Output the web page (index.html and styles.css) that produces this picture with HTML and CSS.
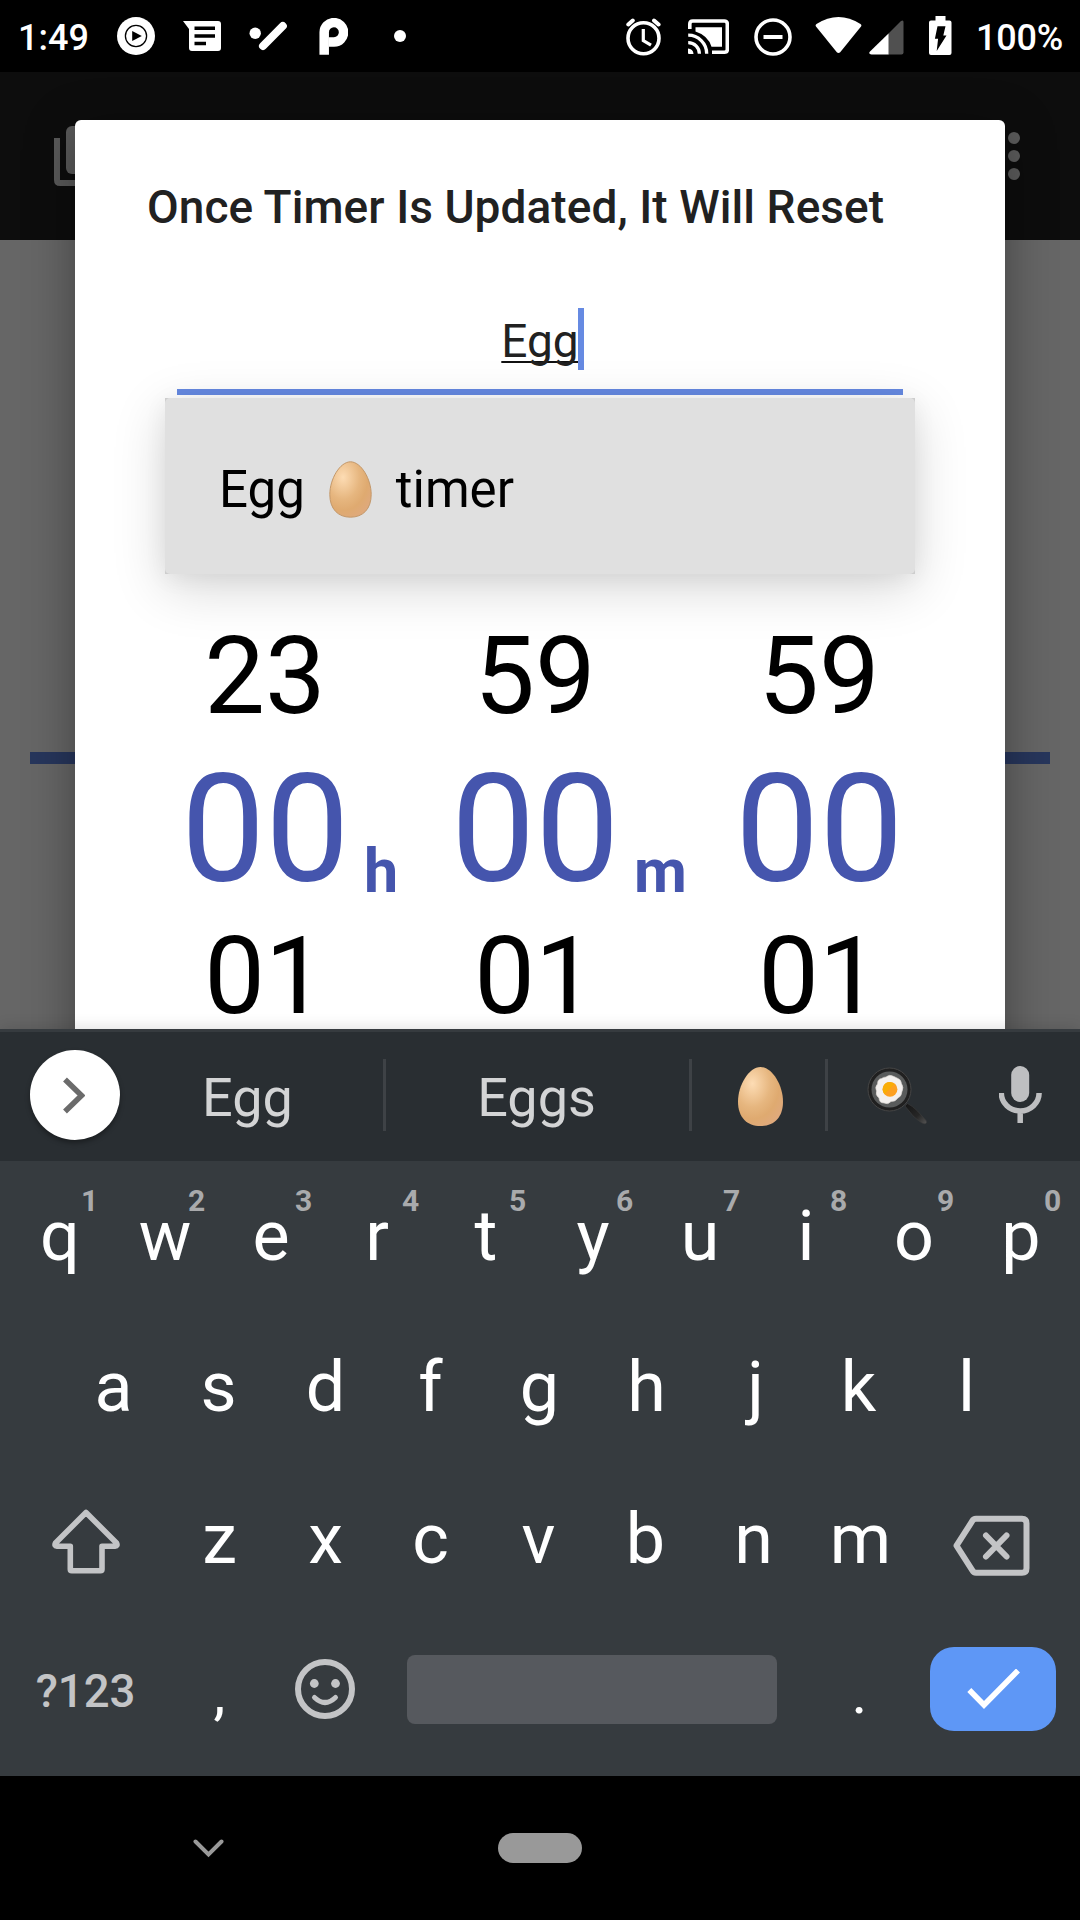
FILE: index.html
```html
<!DOCTYPE html>
<html lang="en">
<head>
<meta charset="utf-8">
<title>Timer</title>
<link rel="stylesheet" href="styles.css">
</head>
<body>
<div class="screen">
  <header class="status">
    <span class="clock">1:49</span>
    <svg class="ic-play" width="38" height="38" viewBox="117 17 38 38"><circle cx="136" cy="36" r="19" fill="#fff"/><circle cx="136" cy="36" r="10.6" fill="none" stroke="#000" stroke-width="1.3"/><path d="M132.2 31v10l9.6-5z" fill="#000"/></svg>
    <svg class="ic-message" width="38" height="30" viewBox="183 21 38 30"><path fill="#fff" d="M183 21h35q3 0 3 3v24q0 3-3 3h-26q-3 0-3-3V29z"/><path fill="none" stroke="#000" stroke-width="3.6" d="M194.500 28.300h20.500M194.500 36h20.500M194.500 43.500h11.500"/></svg>
    <svg class="ic-slash" width="38" height="30" viewBox="249 22 38 30"><circle cx="255.200" cy="34.200" r="5.700" fill="#fff"/><path d="M263 47l19.800-20" stroke="#fff" stroke-width="8" stroke-linecap="round"/></svg>
    <svg class="ic-p" width="29" height="37" viewBox="319 18 29 37"><path fill="none" stroke="#fff" stroke-width="9.500" d="M324.200 54.800V32.500A9.700 9.700 0 1 1 334 42h-5"/></svg>
    <svg class="ic-dot" width="12" height="12" viewBox="0 0 12 12"><circle cx="6" cy="6" r="6" fill="#fff"/></svg>
    <svg class="ic-alarm" width="36" height="38" viewBox="626 18 36 38"><g fill="none" stroke="#fff"><circle cx="643.500" cy="38.300" r="15.500" stroke-width="3.600"/><path stroke-width="3.200" d="M643.300 29v11.500l7.700 4.600"/><path stroke-width="4" stroke-linecap="round" d="M628.300 24.500l4.500-4M654 20.500l4.600 4"/></g></svg>
    <svg class="ic-cast" width="41" height="36" viewBox="688 19 41 36"><g fill="none" stroke="#fff"><path stroke-width="3.600" d="M689.800 29V24q0-3 3-3h31.500q3 0 3 3v25.500q0 2.700-3 2.700H712"/><path stroke-width="3.300" d="M688.200 35.200a18.500 18.500 0 0 1 18.500 18.500M688.200 42.600a11.200 11.200 0 0 1 11.200 11.200"/></g><path fill="#fff" d="M688 48.500a5.500 5.500 0 0 1 5.500 5.500H689q-1 0-1-1zM695.500 27.300H722v19.400h-10.500Q708 35.500 695.500 31.500z"/></svg>
    <svg class="ic-dnd" width="38" height="38" viewBox="754.500 17.500 38 38"><circle cx="773.500" cy="36.500" r="17" fill="none" stroke="#fff" stroke-width="3.600"/><path d="M764 36.500h19" stroke="#fff" stroke-width="4"/></svg>
    <svg class="ic-wifi" width="47" height="37" viewBox="815 17 47 37"><path fill="#fff" d="M816 26.500q-1-1.500.5-2.500 22-14 44 0 1.500 1 .5 2.500l-20.800 25.700q-1.700 1.600-3.400 0z"/></svg>
    <svg class="ic-signal" width="35" height="35" viewBox="869.500 19.500 35 35"><path fill="#505050" d="M888.500 33.500l13-13q2.500-1.500 2.500 1v30.500q0 2-2 2h-13.500z"/><path fill="#fff" d="M889 33v21h-17q-3.500-.5-1.500-3z"/></svg>
    <svg class="ic-battery" width="23" height="39" viewBox="929 16 23 39"><path fill="#fff" d="M935.500 16h10v4.500h4q2 0 2 2V53q0 2-2 2h-18.500q-2 0-2-2V22.500q0-2 2-2h4.500z"/><path fill="#000" d="M937.500 26.300h8l-2.200 9.200h3.200l-9.800 15.500 1.400-12.300h-3.200z"/></svg>
    <span class="percent">100%</span>
  </header>

  <main class="app">
    <div class="toolbar">
      <svg width="66" height="60" viewBox="54 126 66 60" fill="#5a5a5a"><path d="M54 138h6v42h42v6H60q-6 0-6-6z"/><rect x="66" y="126" width="48" height="48" rx="6"/></svg>
      <svg width="12" height="48" viewBox="0 0 12 48" fill="#5c5c5c"><circle cx="6" cy="6" r="6"/><circle cx="6" cy="24" r="6"/><circle cx="6" cy="42" r="6"/></svg>
    </div>
    <div class="rule"></div>

    <section class="dialog">
      <h1 class="title">Once Timer Is Updated, It Will Reset</h1>
      <div class="field">
        <span class="value">Egg<i class="caret"></i></span>
        <div class="dropdown">
          <span>Egg</span>
          <svg class="egg" width="43" height="57" viewBox="0 0 43 57"><defs><radialGradient id="shell" cx=".32" cy=".28" r=".8"><stop offset="0" stop-color="#fddcb4"/><stop offset=".5" stop-color="#e6b67f"/><stop offset=".75" stop-color="#dfaa70"/><stop offset="1" stop-color="#dfa97c"/></radialGradient></defs><path fill="url(#shell)" stroke="#c3986a" stroke-width="1" d="M21.500.8C32 .8 42.200 18 42.200 33.500 42.200 48 34 56.200 21.500 56.200S.8 48 .8 33.500C.8 18 11 .8 21.500.8z"/></svg>
          <span>timer</span>
        </div>
      </div>
      <div class="picker">
        <span>23</span><span></span><span>59</span><span></span><span>59</span>
        <b>00</b><em>h</em><b>00</b><em>m</em><b>00</b>
        <span>01</span><span></span><span>01</span><span></span><span>01</span>
      </div>
    </section>
  </main>

  <section class="keyboard">
    <div class="suggest">
      <span class="expand"><svg width="22" height="37" viewBox="64 1076.500 22 37"><path d="M66 1079l16.500 16L66 1111" fill="none" stroke="#6b6b6b" stroke-width="5.500"/></svg></span>
      <span class="word word-a">Egg</span>
      <span class="word word-b">Eggs</span>
      <span class="word word-c"><svg width="45" height="59" viewBox="0 0 43 57" preserveAspectRatio="none"><path fill="url(#shell)" d="M21.500 0C32.500 0 43 17.500 43 33.500 43 48.500 34.500 57 21.500 57S0 48.500 0 33.500C0 17.500 10.500 0 21.500 0z"/></svg></span>
      <span class="word word-d"><svg width="61" height="58" viewBox="867 1067 61 58"><defs><linearGradient id="handle" x1="0" y1="0" x2="1" y2="1"><stop offset="0" stop-color="#151515"/><stop offset=".6" stop-color="#262626"/><stop offset="1" stop-color="#555"/></linearGradient></defs><path fill="url(#handle)" stroke="#3d3d3d" stroke-width=".6" d="M905 1106l2.500-2.500q5 2.500 10 7.500l8.500 9.500q1.500 3-1.500 3.300-3 0-11.500-8z"/><circle cx="889.500" cy="1089.500" r="21.500" fill="#202020" stroke="#454545" stroke-width="1"/><circle cx="889.500" cy="1089.500" r="18" fill="#595b5b"/><path fill="#f3f0ee" stroke="#d9d3cf" stroke-width=".6" d="M886 1077q3-3 8-.5l4 2q3 1 3.500 5 2.500 4 .5 8-.5 5-4 6.500-3 4-7 3.500-3 3.500-7 1.500-5 0-5-5-4-3-2.500-7-2-4 1-7 0-5 4-5.500 2-1.500 4.500-1.500z"/><circle cx="890" cy="1089.300" r="7.400" fill="#fda020"/><path fill="#f9ad05" d="M890 1081.900a7.400 7.400 0 0 0-5.500 12.300l10-10.200a7.400 7.400 0 0 0-4.500-2.100z"/></svg></span>
      <svg class="mic" width="43" height="58" viewBox="999 1065 43 58"><rect x="1011.200" y="1065" width="18" height="36" rx="9" fill="#bebfc1"/><path d="M1001.300 1092a18.900 18 0 0 0 37.800 0M1020.200 1110v12" fill="none" stroke="#bebfc1" stroke-width="5.500"/></svg>
    </div>
    <div class="row row-1">
      <kbd class="right-2">q<sup>1</sup></kbd><kbd>w<sup>2</sup></kbd><kbd class="left-1">e<sup>3</sup></kbd><kbd class="left-2">r<sup>4</sup></kbd><kbd>t<sup>5</sup></kbd><kbd>y<sup>6</sup></kbd><kbd>u<sup>7</sup></kbd><kbd class="left-1">i<sup>8</sup></kbd><kbd>o<sup>9</sup></kbd><kbd>p<sup>0</sup></kbd>
    </div>
    <div class="row row-2">
      <kbd class="right-2">a</kbd><kbd>s</kbd><kbd>d</kbd><kbd class="left-2">f</kbd><kbd>g</kbd><kbd>h</kbd><kbd class="right-2">j</kbd><kbd class="left-2">k</kbd><kbd class="left-1">l</kbd>
    </div>
    <div class="row row-3">
      <span class="side shift"><svg width="68" height="66" viewBox="52 1509 68 66"><path fill="none" stroke="#c3c4c6" stroke-width="5.600" stroke-linejoin="round" d="M86 1512.500L55.500 1543q-1.500 3 1.500 3.200h13.300v23q0 1.500 1.500 1.500h28.700q1.500 0 1.500-1.500v-23H115q3-.2 1.500-3.200z"/></svg></span>
      <kbd class="right-1">z</kbd><kbd>x</kbd><kbd class="left-2">c</kbd><kbd class="left-1">v</kbd><kbd class="left-1">b</kbd><kbd>n</kbd><kbd>m</kbd>
      <span class="side delete"><svg width="77" height="61" viewBox="953.500 1514.500 77 61"><g fill="none" stroke="#c3c4c6"><path stroke-width="6" stroke-linejoin="round" d="M957 1545.200l16-25q1-2 3.500-2h46q4.500 0 4.500 4.500v45q0 4.500-4.500 4.500h-46q-2.500 0-3.500-2z"/><path stroke-width="6" stroke-linecap="round" d="M986.500 1535l20.500 21M1007 1535l-20.500 21"/></g></svg></span>
    </div>
    <div class="row row-4">
      <span class="symbols">?123</span>
      <kbd class="punct right-1">,</kbd>
      <span class="emoji"><svg width="60" height="60" viewBox="0 0 60 60"><g fill="none" stroke="#c3c4c6"><circle cx="30" cy="30" r="27" stroke-width="6"/><path stroke-width="5" stroke-linecap="round" d="M19.500 38.500q10.500 10 21 0"/></g><circle cx="19.300" cy="24.500" r="4.400" fill="#c3c4c6"/><circle cx="40.500" cy="24.500" r="4.400" fill="#c3c4c6"/></svg></span>
      <span class="space"></span>
      <kbd class="punct">.</kbd>
      <span class="enter"><svg width="53" height="40" viewBox="967 1670 53 40"><path fill="none" stroke="#fff" stroke-width="5.600" d="M969.300 1691l14.700 15 34-34.500"/></svg></span>
    </div>
  </section>

  <footer class="nav">
    <svg class="hide" width="31" height="19" viewBox="192.500 1839.500 31 19"><path fill="none" stroke="#999" stroke-width="4" stroke-linecap="round" d="M195 1842l13 13 13-13"/></svg>
    <span class="home"></span>
  </footer>
</div>
</body>
</html>
```
FILE: styles.css
```css
* { box-sizing: border-box; }
body { margin: 0; background: #000; font-family: Roboto, "Noto Sans", sans-serif; }
svg { display: block; flex: none; }
.screen { width: 1080px; height: 1920px; overflow: hidden; display: flex; flex-direction: column; }

.status { height: 72px; flex: none; display: flex; align-items: center; background: #000; color: #fff; font-size: 36px; font-weight: 500; line-height: 69px; position: relative; z-index: 3; }
.clock { width: 117px; padding: 4px 0 0 18px; }
.percent { padding-top: 4px; margin-left: 24px; letter-spacing: -.2px; }
.ic-message, .ic-slash { margin-left: 28px; }
.ic-p { margin-left: 32px; }
.ic-dot { margin-left: 46px; }
.ic-alarm { margin: 1px 0 0 220px; }
.ic-cast { margin: 1px 0 0 26px; }
.ic-dnd { margin: 1px 0 0 25px; }
.ic-wifi { margin: 0 0 1px 23px; }
.ic-signal { margin: 2px 0 0 7px; }
.ic-battery { margin: 0 0 1px 25px; }

.app { height: 957px; flex: none; position: relative; overflow: hidden; background: #666; }
.toolbar { height: 168px; padding: 0 60px 0 54px; display: flex; align-items: center; justify-content: space-between; background: #0d0d0d; }
.rule { height: 12px; margin: 512px 30px 0; background: #27365c; }

.dialog { position: absolute; left: 75px; top: 48px; width: 930px; height: 1100px; padding-top: 60px; background: #fff; border-radius: 6px; box-shadow: 0 12px 50px rgba(0, 0, 0, .36); }
.title { margin: 0 0 0 72px; font-size: 46px; font-weight: 500; line-height: 54px; letter-spacing: .06px; color: #212121; white-space: nowrap; }
.field { position: relative; height: 87px; margin: 74px 102px 0; border-bottom: 6px solid #668ae2; text-align: center; font-size: 46px; line-height: 66px; color: #212121; }
.value { position: relative; display: inline-block; text-decoration: underline 2px #111; text-underline-offset: 4px; text-decoration-skip-ink: none; }
.caret { position: absolute; right: -5px; top: 0; width: 6px; height: 62px; background: #668ae2; }
.dropdown { position: absolute; left: -12px; top: 90px; width: 750px; height: 176px; padding: 7px 54px 0; display: flex; align-items: center; isolation: isolate; background: #cdcdcd; box-shadow: 0 14px 50px rgba(0, 0, 0, .16), 0 4px 22px rgba(0, 0, 0, .06); color: #000; font-size: 51px; }
.dropdown::before { content: ""; position: absolute; inset: 0; z-index: -1; border-radius: 5px; background: #e0e0e0; }
.egg { margin: 0 24px; }

.picker { display: grid; grid-template-columns: 168px 102px 168px 116px 168px; grid-template-rows: 150px 155px 140px; margin: 206px 0 0 106px; color: #000; font-size: 108px; text-align: center; align-items: center; line-height: 1; }
.picker b { padding-top: 3px; font-size: 150px; font-weight: 400; color: #4555ad; }
.picker em { padding: 86px 0 0 15px; font-size: 61px; font-style: normal; font-weight: 700; color: #4555ad; text-align: left; }

.keyboard { height: 747px; flex: none; display: flex; flex-direction: column; background: #363b3f; position: relative; z-index: 2; box-shadow: 0 -2px 14px rgba(0, 0, 0, .12); }
.suggest { height: 132px; padding: 0 0 3px 30px; display: flex; align-items: center; border-top: 3px solid #363b3f; background: #292e32; color: #d3d4d5; font-size: 54px; }
.expand { width: 90px; height: 90px; margin-right: -9px; padding-right: 2px; flex: none; border-radius: 50%; background: #fff; box-shadow: 0 3px 5px rgba(0, 0, 0, .35); display: flex; align-items: center; justify-content: center; }
.word { height: 72px; flex: none; display: flex; align-items: center; justify-content: center; border-right: 3px solid #3e4246; padding-top: 4px; }
.word-a { width: 275px; padding-left: 1px; }
.word-b { width: 306px; padding-right: 2px; }
.word-c { width: 136px; padding: 2px 0 0 4px; }
.word-d { width: 137px; border: 0; padding: 2px 0 0 1px; }
.mic { margin: 0 0 1px 34px; }

.row { display: flex; color: #fff; font-size: 70px; }
.row-1 { height: 150px; padding-left: 4.500px; }
.row-2 { height: 151px; padding-left: 58px; }
.row-3 { height: 153px; padding-left: 4px; }
.row-4 { height: 148px; }
kbd { position: relative; width: 107px; flex: none; display: flex; align-items: center; justify-content: center; font-family: inherit; }
.left-1 { padding-right: 2px; }
.left-2 { padding-right: 4px; }
.right-1 { padding-left: 2px; }
.right-2 { padding-left: 4px; }
sup { position: absolute; left: calc(50% + 31.600px); top: 25px; transform: translateX(-50%); font-size: 30px; line-height: 30px; font-weight: 700; color: #a9aaac; }
.side { width: 161px; display: flex; align-items: center; justify-content: center; }
.shift { padding: 6px 0 0 2px; }
.delete { padding: 13px 6px 0 0; }
.symbols { width: 165px; padding: 4px 0 0 6px; display: flex; align-items: center; justify-content: center; font-size: 45.500px; font-weight: 500; color: #c3c4c6; }
.punct { font-size: 60px; padding-top: 6px; }
.emoji { width: 107px; padding-right: 2px; display: flex; align-items: center; justify-content: center; }
.space { width: 370px; height: 69px; margin: 40px 29px 0 28px; border-radius: 8px; background: #56595e; }
.enter { width: 126px; height: 84px; margin: 32px 0 0 17px; border-radius: 24px; background: #5e97f6; display: flex; align-items: center; justify-content: center; }

.nav { flex: 1; display: flex; align-items: center; background: #000; position: relative; z-index: 3; }
.hide { margin-left: 192.500px; margin-top: 1px; }
.home { width: 84px; height: 30px; margin-left: 274.500px; border-radius: 15px; background: #999; }
```
